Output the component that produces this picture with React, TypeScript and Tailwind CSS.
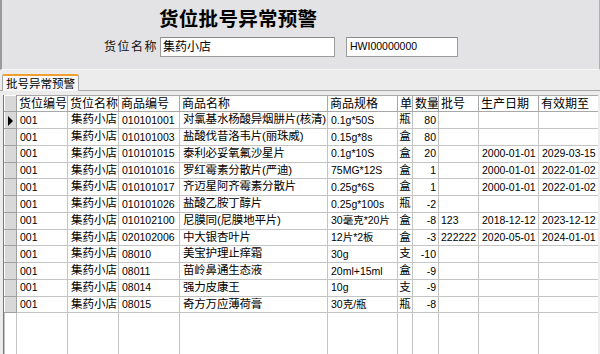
import React from "react";

const COLS = [
  { key: "sel", title: "", w: 12 },
  { key: "hwbh", title: "货位编号", w: 51 },
  { key: "hwmc", title: "货位名称", w: 51 },
  { key: "spbh", title: "商品编号", w: 61 },
  { key: "spmc", title: "商品名称", w: 148 },
  { key: "gg", title: "商品规格", w: 70 },
  { key: "dw", title: "单", w: 15 },
  { key: "sl", title: "数量", w: 26 },
  { key: "ph", title: "批号", w: 40 },
  { key: "sc", title: "生产日期", w: 60 },
  { key: "yx", title: "有效期至", w: 60 },
];

type Row = [string, string, string, string, string, string, string, string, string, string];

const ROWS: Row[] = [
  ["001", "集药小店", "010101001", "对氯基水杨酸异烟肼片(核清)", "0.1g*50S", "瓶", "80", "", "", ""],
  ["001", "集药小店", "010101003", "盐酸伐昔洛韦片(丽珠威)", "0.15g*8s", "盒", "80", "", "", ""],
  ["001", "集药小店", "010101015", "泰利必妥氧氟沙星片", "0.1g*10S", "盒", "20", "", "2000-01-01", "2029-03-15"],
  ["001", "集药小店", "010101016", "罗红霉素分散片(严迪)", "75MG*12S", "盒", "1", "", "2000-01-01", "2022-01-02"],
  ["001", "集药小店", "010101017", "齐迈星阿齐霉素分散片", "0.25g*6S", "盒", "1", "", "2000-01-01", "2022-01-02"],
  ["001", "集药小店", "010101026", "盐酸乙胺丁醇片", "0.25g*100s", "瓶", "-2", "", "", ""],
  ["001", "集药小店", "010102100", "尼膜同(尼膜地平片)", "30毫克*20片", "盒", "-8", "123", "2018-12-12", "2023-12-12"],
  ["001", "集药小店", "020102006", "中大银杏叶片", "12片*2板", "盒", "-3", "222222", "2020-05-01", "2024-01-01"],
  ["001", "集药小店", "08010", "美宝护理止痒霜", "30g", "支", "-10", "", "", ""],
  ["001", "集药小店", "08011", "苗岭鼻通生态液", "20ml+15ml", "盒", "-9", "", "", ""],
  ["001", "集药小店", "08014", "强力皮康王", "10g", "支", "-9", "", "", ""],
  ["001", "集药小店", "08015", "奇方万应薄荷膏", "30克/瓶", "瓶", "-8", "", "", ""],
];

// cell font size per data column: CJK columns a bit larger, digit columns narrower
const CELL_CLS = [
  "pl-[3px] pr-[1px] text-[10.5px]",
  "pl-[3px] pr-0 text-[11.5px]",
  "pl-[3px] pr-0 text-[10.5px]",
  "pl-[3px] pr-0 text-[11.5px] tracking-[-0.2px]",
  "pl-[3px] pr-0 text-[10.5px]",
  "px-0 text-center text-[11.5px]",
  "pl-0 pr-[2px] text-right text-[10.5px]",
  "pl-[2px] pr-0 text-[10.5px]",
  "pl-[3px] pr-0 text-[10.5px]",
  "pl-[3px] pr-0 text-[10.5px]",
];

const FONT = { fontFamily: '"Liberation Sans", "Noto Sans CJK SC", sans-serif' };

export default function App() {
  return (
    <div className="w-[600px] h-[354px] overflow-hidden bg-[#ececec] text-black flex flex-col" style={FONT}>
      {/* Header panel */}
      <div className="h-[70px] shrink-0 bg-[#e3e3e5] border-l-2 border-r border-b border-l-[#9a9a9a] border-r-[#b0b0b0] border-b-[#f6f6f6] flex flex-col">
        <h1 className="mt-[7px] ml-[157px] text-[19.5px] font-bold leading-[24px] tracking-[0.3px]">货位批号异常预警</h1>
        <div className="mt-[6px] ml-[102px] flex items-center">
          <span className="text-[12px] tracking-[1.5px] mr-[2px] text-[#111]">货位名称</span>
          <div className="w-[175px] h-[20px] bg-white border border-[#9c9c9c] border-t-[#8a8a8a] flex items-center px-[2px] text-[12px]">
            集药小店
          </div>
          <div className="ml-[11px] w-[112px] h-[20px] bg-white border border-[#9c9c9c] border-t-[#8a8a8a] flex items-center px-[3px] text-[10.5px]">
            HWI00000000
          </div>
        </div>
      </div>

      {/* Tab strip */}
      <div className="h-[22px] shrink-0 flex items-end pl-[2px] border-b border-[#a8a8a8] mt-[-1px]">
        <div className="h-[17px] px-[3px] bg-[#f7f7f7] border-t-2 border-t-[#f0a030] border-x border-x-[#a8a8a8] rounded-t-[2px] text-[11.5px] leading-[14px] flex items-center mb-[-1px]">
          批号异常预警
        </div>
      </div>

      {/* Grid */}
      <div className="mt-[4px] ml-[3px] mr-[2px] flex-1 bg-white border-l border-[#7a7a7a] overflow-hidden">
        <table className="table-fixed border-collapse leading-none" style={{ width: 594 }}>
          <colgroup>
            {COLS.map((c) => (
              <col key={c.key} style={{ width: c.w }} />
            ))}
          </colgroup>
          <thead>
            <tr className="h-[16px]">
              {COLS.map((c, i) =>
                i === 0 ? (
                  <th key={c.key} className="p-0 bg-[#d8d8d8] border border-[#a0a0a0] border-t-white border-l-white" />
                ) : (
                  <th
                    key={c.key}
                    className="pl-[2px] pr-0 text-left font-normal text-[12px] whitespace-nowrap overflow-hidden border border-[#a8a8a8] bg-white"
                  >
                    {c.title}
                  </th>
                )
              )}
            </tr>
          </thead>
          <tbody>
            {ROWS.map((r, ri) => (
              <tr key={ri} className="h-[16.75px]">
                <td className="p-0 bg-[#d8d8d8] border border-[#a0a0a0] border-t-white border-l-white text-center">
                  {ri === 0 && (
                    <svg width="7" height="10" viewBox="0 0 7 10" className="inline-block">
                      <path d="M1 0 L6 5 L1 10 Z" fill="#000" />
                    </svg>
                  )}
                </td>
                {r.map((v, ci) => (
                  <td
                    key={ci}
                    className={`py-0 whitespace-nowrap overflow-hidden border border-[#c4c4c4] ${CELL_CLS[ci]}`}
                  >
                    {v}
                  </td>
                ))}
              </tr>
            ))}
            <tr className="h-[50px]">
              <td className="p-0 border border-[#c4c4c4] border-b-0" />
              {COLS.slice(1).map((c) => (
                <td key={c.key} className="p-0 border border-[#c4c4c4] border-b-0" />
              ))}
            </tr>
          </tbody>
        </table>
      </div>
    </div>
  );
}
